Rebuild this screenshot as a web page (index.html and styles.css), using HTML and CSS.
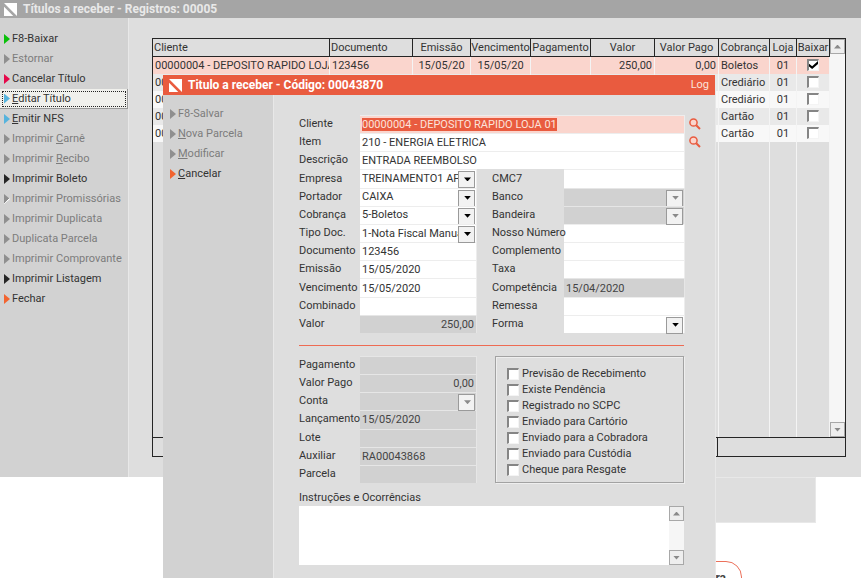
FILE: index.html
```html
<!DOCTYPE html>
<html lang="pt-BR">
<head>
<meta charset="utf-8">
<title>Títulos a receber</title>
<link rel="stylesheet" href="styles.css">
</head>
<body>
<main class="desktop">
<div class="back-panel"></div>
<button class="back-button" type="button">ra</button>

<section class="window">
  <header class="titlebar">
    <svg class="logo" viewBox="0 0 14 14"><path d="M0 0h14v14zM0 4v10h10z"/></svg>
    <h1>Títulos a receber - Registros: 00005</h1>
  </header>
  <div class="window-body">
    <nav class="menu">
      <button type="button" class="on green">F8-Baixar</button>
      <button type="button" disabled>Estornar</button>
      <button type="button" class="on red">Cancelar Título</button>
      <button type="button" class="on blue current"><u>E</u>ditar Título</button>
      <button type="button" class="on blue"><u>E</u>mitir NFS</button>
      <button type="button" disabled>Imprimir <u>C</u>arnê</button>
      <button type="button" disabled>Imprimir <u>R</u>ecibo</button>
      <button type="button" class="on">Imprimir Boleto</button>
      <button type="button" class="half" disabled>Imprimir Promissórias</button>
      <button type="button" disabled>Imprimir Duplicata</button>
      <button type="button" disabled>Duplicata Parcela</button>
      <button type="button" disabled>Imprimir Comprovante</button>
      <button type="button" class="on">Imprimir Listagem</button>
      <button type="button" class="on orange">Fechar</button>
    </nav>
    <div class="content">
      <div class="list">
        <div class="list-main">
          <table>
            <colgroup><col><col class="w83"><col class="w58"><col class="w60"><col class="w60"><col class="w64"><col class="w64"><col class="w51"><col class="w27"><col class="w33"></colgroup>
            <thead><tr><th class="l">Cliente</th><th class="l">Documento</th><th>Emissão</th><th>Vencimento</th><th>Pagamento</th><th>Valor</th><th>Valor Pago</th><th>Cobrança</th><th>Loja</th><th>Baixar</th></tr></thead>
            <tbody>
              <tr class="sel"><td>00000004 - DEPOSITO RAPIDO LOJA 01</td><td>123456</td><td class="c">15/05/20</td><td class="c">15/05/20</td><td></td><td class="r">250,00</td><td class="r">0,00</td><td>Boletos</td><td class="c">01</td><td class="c"><input type="checkbox" aria-label="Baixar" checked></td></tr>
              <tr><td>00</td><td></td><td></td><td></td><td></td><td></td><td></td><td>Crediário</td><td class="c">01</td><td class="c"><input type="checkbox" aria-label="Baixar"></td></tr>
              <tr><td>00</td><td></td><td></td><td></td><td></td><td></td><td></td><td>Crediário</td><td class="c">01</td><td class="c"><input type="checkbox" aria-label="Baixar"></td></tr>
              <tr><td>00</td><td></td><td></td><td></td><td></td><td></td><td></td><td>Cartão</td><td class="c">01</td><td class="c"><input type="checkbox" aria-label="Baixar"></td></tr>
              <tr><td>00</td><td></td><td></td><td></td><td></td><td></td><td></td><td>Cartão</td><td class="c">01</td><td class="c"><input type="checkbox" aria-label="Baixar"></td></tr>
              <tr class="rest"><td></td><td></td><td></td><td></td><td></td><td></td><td></td><td></td><td></td><td></td></tr>
            </tbody>
          </table>
          <div class="scroll"><button type="button" class="up" aria-label="Subir"></button><button type="button" class="down" aria-label="Descer"></button></div>
        </div>
        <div class="totals"><span></span><span></span></div>
      </div>
    </div>
  </div>
</section>

<section class="dialog">
  <header class="titlebar accent">
    <svg class="logo" viewBox="0 0 14 14"><path d="M0 0h14v14zM0 4v10h10z"/></svg>
    <h2>Titulo a receber - Código: 00043870</h2>
    <a href="#log">Log</a>
  </header>
  <div class="window-body">
    <nav class="menu">
      <button type="button" disabled>F8-Salvar</button>
      <button type="button" disabled><u>N</u>ova Parcela</button>
      <button type="button" disabled><u>M</u>odificar</button>
      <button type="button" class="on orange"><u>C</u>ancelar</button>
    </nav>
    <form class="form">
      <div class="fields upper">
        <label for="cliente">Cliente</label><input class="wide active" id="cliente" value="00000004 - DEPOSITO RAPIDO LOJA 01"><button type="button" class="find" aria-label="Buscar cliente"><svg viewBox="0 0 12 12"><circle cx="4.5" cy="4.5" r="3.6"/><path d="M7.2 7.2L11 11"/></svg></button>
        <label for="item">Item</label><input class="wide" id="item" value="210 - ENERGIA ELETRICA"><button type="button" class="find" aria-label="Buscar item"><svg viewBox="0 0 12 12"><circle cx="4.5" cy="4.5" r="3.6"/><path d="M7.2 7.2L11 11"/></svg></button>
        <label for="desc">Descrição</label><input class="wide" id="desc" value="ENTRADA REEMBOLSO">
        <label for="emp">Empresa</label><div class="combo"><select id="emp"><option>TREINAMENTO1 APEX</option></select></div>
        <label class="second" for="cmc">CMC7</label><input id="cmc">
        <label for="port">Portador</label><div class="combo"><select id="port"><option>CAIXA</option></select></div>
        <label class="second" for="banco">Banco</label><div class="combo"><select id="banco" disabled><option></option></select></div>
        <label for="cob">Cobrança</label><div class="combo"><select id="cob"><option>5-Boletos</option></select></div>
        <label class="second" for="band">Bandeira</label><div class="combo"><select id="band" disabled><option></option></select></div>
        <label for="tipo">Tipo Doc.</label><div class="combo"><select id="tipo"><option>1-Nota Fiscal Manual</option></select></div>
        <label class="second" for="nosso">Nosso Número</label><input id="nosso">
        <label for="doc">Documento</label><input id="doc" value="123456">
        <label class="second" for="comp">Complemento</label><input id="comp">
        <label for="emi">Emissão</label><input id="emi" value="15/05/2020">
        <label class="second" for="taxa">Taxa</label><input id="taxa">
        <label for="venc">Vencimento</label><input id="venc" value="15/05/2020">
        <label class="second" for="compet">Competência</label><input id="compet" value="15/04/2020" disabled>
        <label for="comb">Combinado</label><input id="comb">
        <label class="second" for="rem">Remessa</label><input id="rem">
        <label for="valor">Valor</label><input class="num" id="valor" value="250,00" disabled>
        <label class="second" for="forma">Forma</label><div class="combo"><select id="forma"><option></option></select></div>
      </div>
      <div class="rule"></div>
      <div class="lower">
        <div class="fields payment">
          <label for="pag">Pagamento</label><input id="pag" disabled>
          <label for="vp">Valor Pago</label><input class="num" id="vp" value="0,00" disabled>
          <label for="conta">Conta</label><div class="combo"><select id="conta" disabled><option></option></select></div>
          <label for="lanc">Lançamento</label><input id="lanc" value="15/05/2020" disabled>
          <label for="lote">Lote</label><input id="lote" disabled>
          <label for="aux">Auxiliar</label><input id="aux" value="RA00043868" disabled>
          <label for="parc">Parcela</label><input id="parc" disabled>
        </div>
        <fieldset>
          <label><input type="checkbox">Previsão de Recebimento</label>
          <label><input type="checkbox">Existe Pendência</label>
          <label><input type="checkbox">Registrado no SCPC</label>
          <label><input type="checkbox">Enviado para Cartório</label>
          <label><input type="checkbox">Enviado para a Cobradora</label>
          <label><input type="checkbox">Enviado para Custódia</label>
          <label><input type="checkbox">Cheque para Resgate</label>
        </fieldset>
      </div>
      <label class="notes-label" for="obs">Instruções e Ocorrências</label>
      <div class="notes"><textarea id="obs"></textarea><div class="scroll"><button type="button" class="up" aria-label="Subir"></button><button type="button" class="down" aria-label="Descer"></button></div></div>
    </form>
  </div>
</section>
</main>
<script src="script.js"></script>
</body>
</html>
```
FILE: script.js
```js
const cliente = document.getElementById("cliente");
cliente.focus();
cliente.select();
```
FILE: styles.css
```css
* { box-sizing: border-box; }
body { margin: 0; background: #fff; color: #333; font: 11px/16px Roboto, "Open Sans", sans-serif; }
button, input, select, textarea { font: inherit; color: inherit; margin: 0; padding: 0; border: 0; border-radius: 0; outline: 0; }
.desktop { position: relative; height: 100vh; overflow: hidden; }

.window { display: flex; flex-direction: column; height: 477px; background: #dedede; }
.titlebar { display: flex; align-items: center; flex: none; height: 18px; padding-left: 4px; background: #a5a5a5; color: #e9e9e9; }
.titlebar h1, .titlebar h2 { margin: 0; flex: 1; font-size: 12px; line-height: 16px; font-weight: 700; }
.logo { width: 13px; height: 13px; margin-right: 6px; fill: #fff; }
.accent { height: 20px; padding: 0 6px 0 6px; background: #e95b3f; color: #fff; }
.titlebar a { color: #fbe3dc; text-decoration: none; }
.window-body { display: flex; flex: 1; min-height: 0; }

.menu { flex: none; width: 129px; padding-top: 11px; background: #d2d2d2; border-right: 1px solid #e8e8e8; }
.menu button { display: flex; align-items: center; width: 100%; height: 20px; padding-left: 4px; background: none; color: #7c7c7c; white-space: pre; text-align: left; }
.menu button::before { content: ""; flex: none; width: 6px; height: 10px; margin-right: 2px; background: #8f8f8f; clip-path: polygon(0 0, 100% 50%, 0 100%); }
.menu .on { color: #333; }
.menu .on::before { background: #252525; }
.menu .green::before { background: #0ac00a; }
.menu .red::before { background: #e5094a; }
.menu .blue::before { background: #56b3dd; }
.menu .orange::before { background: #f26430; }
.menu .half::before { background: linear-gradient(135deg, #8f8f8f 60%, #fff 60%); }
.menu .current { background: #f0f0ec; border-bottom: 1px solid #999; border-right: 1px solid #999; outline: 1px dotted #222; outline-offset: -3px; }

.content { flex: 1; min-width: 0; padding: 20px 15px 20px 23px; }
.list { display: flex; flex-direction: column; height: 100%; border: 1px solid #252525; }
.list-main { display: flex; flex: 1; min-height: 0; }
table { flex: 1; width: 0; height: 100%; table-layout: fixed; border-collapse: separate; border-spacing: 0; }
.w83 { width: 83px; } .w58 { width: 58px; } .w60 { width: 60px; } .w64 { width: 64px; }
.w51 { width: 51px; } .w27 { width: 27px; } .w33 { width: 33px; }
th, td { height: 17px; padding: 0 2px; line-height: 16px; font-weight: 400; white-space: nowrap; overflow: hidden; }
th { height: 18px; padding: 0; text-align: center; border-right: 1px solid #252525; border-bottom: 1px solid #252525; }
.l { text-align: left; padding-left: 1px; }
td { background: #f8f8f8; border-right: 1px solid #f4f4f4; }
tr:nth-child(even) td { background: #e9e9e9; }
.sel td { background: #fad5cd; }
tbody .rest td { height: auto; background: #dedede; }
.c { text-align: center; }
.r { text-align: right; }
.totals { display: flex; height: 19px; border-top: 1px solid #252525; }
.totals span:first-child { flex: 1; border-right: 1px solid #252525; }
.totals span:last-child { width: 127px; }

.scroll { display: flex; flex-direction: column; justify-content: space-between; flex: none; width: 15px; background: #f6f6f6; }
.scroll button { display: grid; place-items: center; width: 15px; height: 15px; background: #eee; border: 1px solid #a8a8a8; }
.scroll button::before { content: ""; width: 7px; height: 4px; background: #8a8a8a; clip-path: polygon(0 0, 100% 0, 50% 100%); }
.scroll .up::before { clip-path: polygon(50% 0, 100% 100%, 0 100%); }

input[type="checkbox"] { appearance: none; display: inline-grid; place-items: center; width: 12px; height: 12px; background: #fff; border: 1px solid #f4f4f4; border-top: 2px solid #858585; border-left: 2px solid #858585; vertical-align: top; }
td input[type="checkbox"] { margin-top: 1px; }
input[type="checkbox"]:checked::before { content: ""; width: 9px; height: 8px; background: #000; clip-path: polygon(0 35%, 35% 65%, 100% 0, 100% 38%, 35% 100%, 0 70%); }

.dialog { position: absolute; left: 163px; top: 75px; right: 145px; bottom: 0; display: flex; flex-direction: column; background: #dedede; border-right: 1px solid #e8e8e8; }
.dialog .menu { width: 111px; padding: 9px 0 0 3px; }
.form { flex: 1; min-width: 0; padding: 20px 0 0 25px; }
.fields { display: grid; grid-template-columns: 61px 117px; }
.upper { height: 218px; grid-template-columns: 61px 117px 15px 72px 1fr 30px; grid-template-rows: repeat(12, 1fr); }
.upper > label:not(.second) { grid-column: 1; }
.second { grid-column: 4; }
.fields label { position: relative; z-index: 1; align-self: center; white-space: nowrap; }
.fields input, .fields select { width: 100%; min-width: 0; height: 100%; padding: 0 2px; background: #fff; border: 1px solid #ededed; border-width: 1px 1px 0 0; }
.fields .wide { grid-column: 2 / 6; }
.fields .active { background: #fad5cd; }
.active::selection { background: #e95b3f; color: #fbe3dc; }
.fields input:disabled, .fields select:disabled { background: #d1d1d1; color: #444; border-color: #e6e6e6; opacity: 1; }
.fields .num { text-align: right; }
.fields select { appearance: none; padding-right: 18px; }
.combo { position: relative; min-width: 0; min-height: 0; }
.combo::before { content: ""; position: absolute; top: 2px; right: 2px; width: 15px; height: 15px; background: #f2f2f2; border: 1px solid #9a9a9a; pointer-events: none; }
.combo::after { content: ""; position: absolute; top: 8px; right: 6px; width: 7px; height: 4px; background: #000; clip-path: polygon(0 0, 100% 0, 50% 100%); pointer-events: none; }
.combo:has(:disabled)::after { background: #8a8a8a; }
.find { display: grid; align-items: center; padding-left: 4px; background: none; }
.find svg { width: 12px; height: 12px; fill: #fad5cd; stroke: #e95b3f; stroke-width: 1.5; }
.find path { stroke-width: 2; }
.rule { height: 1px; margin: 12px 31px 10px 0; background: #ee6b53; }
.lower { display: flex; justify-content: space-between; margin-right: 31px; }
.payment { height: 127px; grid-template-rows: repeat(7, 1fr); }
fieldset { display: flex; flex-direction: column; width: 189px; margin: 0; padding: 9px 0 0 11px; border: 1px solid #a2a2a2; box-shadow: 1px 1px #eee, inset 1px 1px #eee; }
fieldset label { display: flex; align-items: center; height: 16px; white-space: nowrap; }
fieldset input { margin-right: 3px; }
.notes-label { display: block; margin-top: 7px; }
.notes { display: flex; height: 59px; margin-right: 31px; background: #fff; }
.notes textarea { flex: 1; min-width: 0; resize: none; background: #fff; overflow: hidden; }

.back-panel { position: absolute; left: 163px; top: 477px; right: 45px; height: 46px; background: #dedede; border: 1px solid #e8e8e8; }
.back-button { position: absolute; right: 119px; top: 561px; width: 120px; height: 34px; padding-right: 15px; background: #fff; border: 1px solid #ec705a; border-radius: 16px; color: #444; font-size: 12px; font-weight: 700; text-align: right; }
```
